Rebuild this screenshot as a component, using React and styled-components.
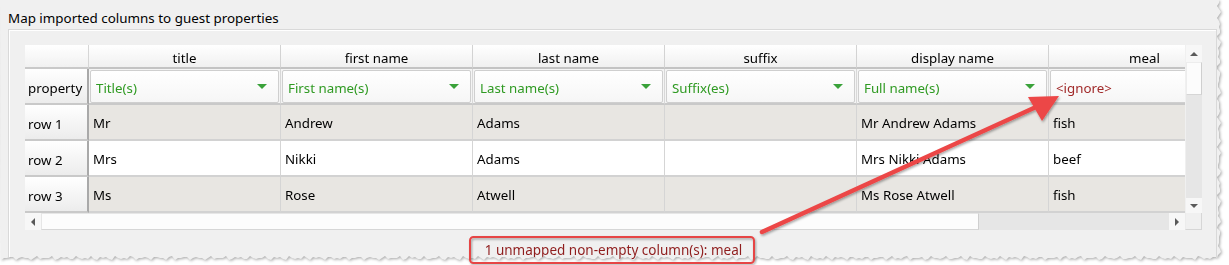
import React from "react";
import styled, { createGlobalStyle } from "styled-components";

const GlobalStyle = createGlobalStyle`
  html, body { margin: 0; padding: 0; background: #ffffff; }
  body { font-family: "Noto Sans", "Open Sans", sans-serif; }
  * { box-sizing: border-box; }
`;

function tornPolygon() {
  const pts = ["0px 0px"];
  const W = 1219;
  const H = 258;
  for (let y = 0; y <= H; y += 3) {
    const j = Math.round((Math.sin(y * 1.7) + Math.sin(y * 0.63)) * 1.2);
    pts.push(`${W + j}px ${y}px`);
  }
  for (let x = W; x >= 0; x -= 3) {
    const j = Math.round((Math.sin(x * 1.3) + Math.sin(x * 0.47)) * 1.2);
    pts.push(`${x}px ${H + j}px`);
  }
  return pts.join(", ");
}
const TORN = tornPolygon();

const Frame = styled.div`
  position: relative;
  width: 1229px;
  height: 265px;
  overflow: hidden;
`;

const Paper = styled.div`
  filter: drop-shadow(1px 1px 1.5px rgba(0, 0, 0, 0.35));
`;

const Panel = styled.div`
  width: 1229px;
  height: 265px;
  background: #f0f0f0;
  clip-path: polygon(${TORN});
  padding: 10px 0 0 8px;
`;

const Title = styled.div`
  font-size: 13.4px;
  line-height: 16px;
  color: #000;
  height: 16px;
`;

const GroupBox = styled.div`
  margin-top: 3px;
  width: 1209px;
  height: 260px;
  border: 1px solid #d9d9d9;
  box-shadow: inset 1px 1px 0 #ffffff;
  padding: 15px 0 0 16px;
`;

const TableFrame = styled.div`
  display: grid;
  grid-template-columns: 1160px 17px;
  grid-template-rows: 168px 17px;
  width: 1177px;
`;

const Viewport = styled.div`
  overflow: hidden;
  background: #ffffff;
`;

const Grid = styled.div`
  display: grid;
  grid-template-columns: 64px repeat(6, 192px);
  grid-template-rows: 24px 36px 36px 36px 36px;
  width: max-content;
`;

const Corner = styled.div`
  background: linear-gradient(#ffffff, #f1f1f1);
  border-bottom: 2px solid #c9c9c9;
  border-right: 1px solid #d6d6d6;
`;

const ColHeader = styled.div`
  background: linear-gradient(#ffffff, #f0f0f0);
  border-bottom: 2px solid #c3c3c3;
  border-right: 1px solid #d3d3d3;
  font-size: 13.3px;
  color: #000;
  display: flex;
  align-items: center;
  justify-content: center;
  padding-top: 4px;
`;

const RowHeader = styled.div`
  background: linear-gradient(#ffffff, #ececec);
  border-right: 2px solid #a9a9a9;
  border-bottom: 2px solid #c9c9c9;
  font-size: 13.3px;
  color: #000;
  display: flex;
  align-items: center;
  padding-left: 3px;
  padding-top: 3px;
`;

const PropCell = styled.div`
  background: #f4f4f4;
  border-bottom: 2px solid #c9c9c9;
  border-right: 1px solid #d8d8d8;
  padding: 1px 1px 0 1px;
  display: flex;
`;

const Combo = styled.div`
  flex: 1;
  display: flex;
  align-items: center;
  justify-content: space-between;
  background: linear-gradient(#ffffff, #f6f6f6);
  border: 1px solid #cfcfcf;
  border-radius: 2px;
  padding: 3px 11px 0 5px;
  font-size: 13.3px;
  color: ${(p) => (p.$ignore ? "#a12a2a" : "#2f9a22")};
`;

const DropArrow = styled.span`
  width: 0;
  height: 0;
  margin-top: -3px;
  border-left: 5px solid transparent;
  border-right: 5px solid transparent;
  border-top: 5px solid #3aa23a;
`;

const Cell = styled.div`
  background: ${(p) => (p.$alt ? "#e8e6e2" : "#ffffff")};
  border-bottom: 2px solid #d2d2d2;
  border-right: 1px solid #d5d5d5;
  font-size: 13.3px;
  color: #000;
  display: flex;
  align-items: center;
  padding: 2px 0 0 4px;
  white-space: nowrap;
`;

const VScroll = styled.div`
  display: grid;
  grid-template-rows: 17px 33px 1fr 15px;
  background: #e8e8e8;
  border-left: 1px solid #f0f0f0;
`;

const HScroll = styled.div`
  display: grid;
  grid-template-columns: 16px 938px 1fr 16px;
  background: #e8e8e8;
`;

const ScrollBtn = styled.div`
  background: #f7f7f7;
  display: flex;
  align-items: center;
  justify-content: center;
`;

const Thumb = styled.div`
  background: #fcfcfc;
  border: 1px solid ${(p) => (p.$h ? "#e6e6e6" : "#ededed")};
  border-right-color: #cfcfcf;
  border-bottom-color: #d6d6d6;
`;

const Track = styled.div`
  background: #e6e6e6;
`;

const ScrollCorner = styled.div`
  background: #f0f0f0;
  border: 1px solid #d6d6d6;
  border-top: none;
  border-left: 1px solid #ececec;
`;

const Tri = styled.span`
  width: 0;
  height: 0;
  ${(p) =>
    p.$dir === "up"
      ? "border-left:4px solid transparent;border-right:4px solid transparent;border-bottom:4px solid #5a5a5a;"
      : p.$dir === "down"
      ? "border-left:4px solid transparent;border-right:4px solid transparent;border-top:4px solid #5a5a5a;"
      : p.$dir === "left"
      ? "border-top:4px solid transparent;border-bottom:4px solid transparent;border-right:4px solid #5a5a5a;"
      : "border-top:4px solid transparent;border-bottom:4px solid transparent;border-left:4px solid #5a5a5a;"}
`;

const StatusRow = styled.div`
  display: flex;
  justify-content: center;
  width: 1177px;
  margin-top: 7px;
`;

const Status = styled.div`
  height: 26px;
  font-size: 13.5px;
  line-height: 26px;
  color: #8f1d1d;
`;

const Overlay = styled.svg`
  position: absolute;
  left: 0;
  top: 0;
  pointer-events: none;
`;

const columns = ["title", "first name", "last name", "suffix", "display name", "meal"];
const props = ["Title(s)", "First name(s)", "Last name(s)", "Suffix(es)", "Full name(s)", "<ignore>"];
const rows = [
  ["Mr", "Andrew", "Adams", "", "Mr Andrew Adams", "fish"],
  ["Mrs", "Nikki", "Adams", "", "Mrs Nikki Adams", "beef"],
  ["Ms", "Rose", "Atwell", "", "Ms Rose Atwell", "fish"],
];

export default function App() {
  return (
    <>
      <GlobalStyle />
      <Frame>
        <Paper>
          <Panel>
            <Title>Map imported columns to guest properties</Title>
            <GroupBox>
              <TableFrame>
                <Viewport>
                  <Grid>
                    <Corner />
                    {columns.map((c) => (
                      <ColHeader key={c}>{c}</ColHeader>
                    ))}
                    <RowHeader>property</RowHeader>
                    {props.map((p, i) => (
                      <PropCell key={p}>
                        <Combo $ignore={i === 5}>
                          <span>{p}</span>
                          {i < 5 && <DropArrow />}
                        </Combo>
                      </PropCell>
                    ))}
                    {rows.map((r, ri) => (
                      <React.Fragment key={ri}>
                        <RowHeader>row {ri + 1}</RowHeader>
                        {r.map((v, ci) => (
                          <Cell key={ci} $alt={ri !== 1}>
                            {v}
                          </Cell>
                        ))}
                      </React.Fragment>
                    ))}
                  </Grid>
                </Viewport>
                <VScroll>
                  <ScrollBtn>
                    <Tri $dir="up" />
                  </ScrollBtn>
                  <Thumb />
                  <Track />
                  <ScrollBtn>
                    <Tri $dir="down" />
                  </ScrollBtn>
                </VScroll>
                <HScroll>
                  <ScrollBtn>
                    <Tri $dir="left" />
                  </ScrollBtn>
                  <Thumb $h />
                  <Track />
                  <ScrollBtn>
                    <Tri $dir="right" />
                  </ScrollBtn>
                </HScroll>
                <ScrollCorner />
              </TableFrame>
              <StatusRow>
                <Status>1 unmapped non-empty column(s): meal</Status>
              </StatusRow>
            </GroupBox>
          </Panel>
        </Paper>
        <Overlay width="1229" height="265" viewBox="0 0 1229 265">
          <defs>
            <filter id="sh" x="-10%" y="-10%" width="120%" height="130%">
              <feDropShadow dx="1" dy="1.5" stdDeviation="1.2" floodColor="#000" floodOpacity="0.35" />
            </filter>
          </defs>
          <g filter="url(#sh)">
            <rect x="470" y="237" width="284" height="26" rx="3.5" fill="none" stroke="#e64545" strokeWidth="2" />
            <line x1="762" y1="232" x2="1036" y2="107" stroke="#ec4646" strokeWidth="4.5" strokeLinecap="round" />
            <polygon points="1059,96 1028,97 1042,121" fill="#ec4646" />
          </g>
        </Overlay>
      </Frame>
    </>
  );
}
